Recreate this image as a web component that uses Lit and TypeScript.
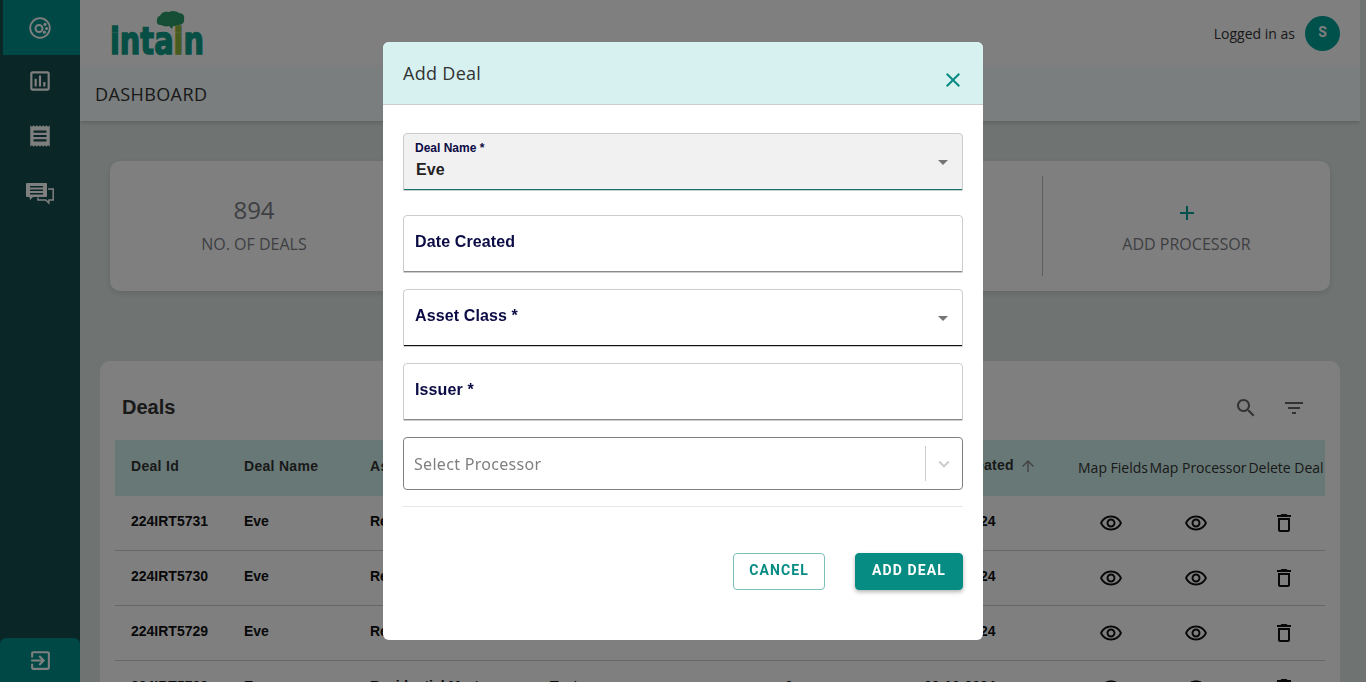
import { LitElement, html, css, svg } from 'lit';
import { customElement } from 'lit/decorators.js';

const icon = (d: string, size = 24) => html`<svg width=${size} height=${size} viewBox="0 0 24 24" fill="currentColor"><path d=${d} /></svg>`;

const EYE = 'M12 6.5c3.79 0 7.17 2.13 8.82 5.5-1.65 3.37-5.02 5.5-8.82 5.5S4.83 15.37 3.18 12C4.83 8.63 8.21 6.5 12 6.5m0-2C7 4.5 2.73 7.61 1 12c1.73 4.39 6 7.5 11 7.5s9.27-3.11 11-7.5c-1.73-4.39-6-7.5-11-7.5zm0 5c1.38 0 2.5 1.12 2.5 2.5s-1.12 2.5-2.5 2.5-2.5-1.12-2.5-2.5 1.12-2.5 2.5-2.5m0-2c-2.48 0-4.5 2.02-4.5 4.5s2.02 4.5 4.5 4.5 4.5-2.02 4.5-4.5-2.02-4.5-4.5-4.5z';
const TRASH = 'M6 19c0 1.1.9 2 2 2h8c1.1 0 2-.9 2-2V7H6v12zM8 9h8v10H8V9zm7.5-5l-1-1h-5l-1 1H5v2h14V4z';
const SEARCH = 'M15.5 14h-.79l-.28-.27C15.41 12.59 16 11.11 16 9.5 16 5.91 13.09 3 9.5 3S3 5.91 3 9.5 5.91 16 9.5 16c1.61 0 3.09-.59 4.23-1.57l.27.28v.79l5 4.99L20.49 19l-4.99-5zm-6 0C7.01 14 5 11.99 5 9.5S7.01 5 9.5 5 14 7.01 14 9.5 11.99 14 9.5 14z';
const FILTER = 'M10 18h4v-2h-4v2zM3 6v2h18V6H3zm3 7h12v-2H6v2z';
const PLUS = 'M19 13h-6v6h-2v-6H5v-2h6V5h2v6h6v2z';
const CLOSE = 'M19 6.41 17.59 5 12 10.59 6.41 5 5 6.41 10.59 12 5 17.59 6.41 19 12 13.41 17.59 19 19 17.59 13.41 12z';
const UP = 'M4 12l1.41 1.41L11 7.83V20h2V7.83l5.58 5.59L20 12l-8-8-8 8z';
const LOGOUT = 'M10.09 15.59 11.5 17l5-5-5-5-1.41 1.41L12.67 11H3v2h9.67l-2.58 2.59zM19 3H5c-1.11 0-2 .9-2 2v4h2V5h14v14H5v-4H3v4c0 1.1.89 2 2 2h14c1.1 0 2-.9 2-2V5c0-1.1-.9-2-2-2z';
const CHART = 'M19 3H5c-1.1 0-2 .9-2 2v14c0 1.1.9 2 2 2h14c1.1 0 2-.9 2-2V5c0-1.1-.9-2-2-2zm0 16H5V5h14v14zM7 10h2v7H7zm4-3h2v10h-2zm4 6h2v4h-2z';
const RECEIPT = 'M3 22l1.5-1.5L6 22l1.5-1.5L9 22l1.5-1.5L12 22l1.5-1.5L15 22l1.5-1.5L18 22l1.5-1.5L21 22V2l-1.5 1.5L18 2l-1.5 1.5L15 2l-1.5 1.5L12 2l-1.5 1.5L9 2 7.5 3.5 6 2 4.5 3.5 3 2v20zM18 17H6v-2h12v2zm0-4H6v-2h12v2zm0-4H6V7h12v2z';
const CHEVRON = 'M7.41 8.59 12 13.17l4.59-4.58L18 10l-6 6-6-6z';

const discIcon = html`<svg width="24" height="24" viewBox="0 0 24 24" fill="none" stroke="currentColor">
  <circle cx="12" cy="12" r="9.8" stroke-width="1.8" />
  <circle cx="11" cy="12.5" r="3.5" stroke-width="2" />
  <circle cx="17" cy="8.4" r="1.6" fill="currentColor" stroke="none" />
  <circle cx="18.6" cy="12.4" r="1.5" fill="currentColor" stroke="none" />
  <circle cx="16.4" cy="16.2" r="1.6" fill="currentColor" stroke="none" />
</svg>`;

const chatIcon = html`<svg width="30" height="24" viewBox="0 0 30 24" fill="none">
  <path fill="currentColor" fill-rule="evenodd" d="M2 1h19a1 1 0 0 1 1 1v12a1 1 0 0 1-1 1H8l-3 3-.5-3H2a1 1 0 0 1-1-1V2a1 1 0 0 1 1-1zM5 4v1.4h13V4zm0 3.5v1.4h13V7.5zm0 3.5v1.4h13V11z" />
  <path stroke="currentColor" stroke-width="1.5" d="M23 7h5.2v11H24l-.2 3-3-3H13v-2.5" />
</svg>`;

const logo = html`<svg class="logo-mark" width="94" height="46" viewBox="0 0 94 46">
  <path fill="#2a9d68" d="M50 6c1-4 6-5 9-4 3-2 8-1 10 1 4 0 6 3 5 6 1 3-2 6-5 6-2 1-4 1-6 1l-1 3-3-3c-3 1-6 0-8-1-3 0-5-2-4-5 0-2 1-4 3-4z" />
  ${svg`<g transform="translate(0 44) scale(.96 1.22)"><text x="0" y="0" font-family="DejaVu Sans" font-weight="700" font-size="30" stroke="#0f9f8a" stroke-width="1.2" fill="#0f9f8a">inta<tspan fill="#8fb83c" stroke="#8fb83c">i</tspan>n</text></g>`}
</svg>`;

const rows = [
  ['224IRT5731', 'Eve', 'Residential Mortgage', 'Test processor', '0', '09-10-2024'],
  ['224IRT5730', 'Eve', 'Residential Mortgage', 'Test processor', '0', '09-10-2024'],
  ['224IRT5729', 'Eve', 'Residential Mortgage', 'Test processor', '0', '09-10-2024'],
  ['224IRT5728', 'Eve', 'Residential Mortgage', 'Test processor', '0', '09-10-2024'],
];

@customElement('app-root')
export class AppRoot extends LitElement {
  static styles = css`
    :host {
      display: block;
      width: 100%;
      height: 682px;
      overflow: hidden;
      position: relative;
      background: #dfe8e5;
      font-family: 'Open Sans', sans-serif;
    }
    .shell { display: flex; height: 682px; }

    .side {
      width: 80px;
      flex: none;
      background: #144c4c;
      color: #fff;
      display: flex;
      flex-direction: column;
    }
    .side-item { display: flex; align-items: center; justify-content: center; }
    .i1 { height: 55px; margin-left: 3px; padding-right: 3px; background: #00908a; }
    .i2 { height: 52px; }
    .i3 { height: 58px; }
    .i4 { height: 58px; }
    .side-out {
      margin-top: auto;
      height: 44px;
      background: #00908a;
      border-radius: 6px 6px 0 0;
      display: flex;
      align-items: center;
      justify-content: center;
    }

    .main { width: 1280px; flex: none; display: flex; flex-direction: column; height: 682px; overflow: hidden; }
    .top {
      height: 66px;
      flex: none;
      background: #fff;
      display: flex;
      align-items: center;
      justify-content: space-between;
      padding: 0 20px 0 30px;
      box-sizing: border-box;
    }
    .logo { height: 46px; }
    .logo-mark { overflow: visible; }
    .user { display: flex; align-items: center; gap: 10px; font-size: 14px; color: #333; }
    .avatar {
      width: 35px;
      height: 35px;
      border-radius: 50%;
      background: #00a096;
      color: #fff;
      font: 700 14px Roboto, sans-serif;
      display: flex;
      align-items: center;
      justify-content: center;
      padding-bottom: 3px;
      box-sizing: border-box;
    }
    .sub {
      height: 55px;
      flex: none;
      background: #f4fcfc;
      box-shadow: 0 2px 4px rgba(0, 0, 0, 0.15);
      display: flex;
      align-items: center;
      padding-left: 15px;
      font-size: 18px;
      letter-spacing: 0.4px;
      color: #333;
    }

    .stats {
      margin: 40px 30px 0 30px;
      height: 130px;
      flex: none;
      background: #fff;
      border-radius: 10px;
      box-shadow: 0 2px 6px rgba(0, 0, 0, 0.12);
      display: grid;
      grid-template-columns: 288px 1fr 288px;
      align-items: center;
    }
    .stat {
      display: flex;
      flex-direction: column;
      align-items: center;
      height: 100px;
      box-sizing: border-box;
      padding-top: 2px;
      justify-content: center;
      color: #7c7f86;
    }
    .stat.last { border-left: 1px solid #bbb; }
    .stat b { font-weight: 400; font-size: 24px; line-height: 34px; height: 34px; }
    .stat svg { color: #00a096; height: 34px; padding-top: 6px; box-sizing: border-box; }
    .stat span { font-size: 16px; line-height: 34px; }

    .deals {
      margin: 70px 20px 0 20px;
      flex: none;
      height: 321px;
      background: #fff;
      border-radius: 10px 10px 0 0;
      padding: 0 15px;
    }
    .deals-head {
      height: 79px;
      display: flex;
      align-items: center;
      color: #666;
      padding: 14px 19px 0 7px;
      box-sizing: border-box;
      gap: 24px;
    }
    .deals-head h2 {
      margin: 0 auto 0 0;
      font: 700 20px 'Liberation Sans', sans-serif;
      color: #333;
    }
    .row {
      display: grid;
      grid-template-columns: 113px 126px 180px 235px 139px 169px 72px 98px 78px;
      align-items: center;
      height: 55px;
      border-bottom: 1px solid #ccc;
      box-sizing: border-box;
      font: 700 14px 'Liberation Sans', sans-serif;
      color: #111;
    }
    .row > div { padding-left: 16px; padding-bottom: 4px; white-space: nowrap; }
    .row > .act {
      padding: 0 4px 0 0;
      display: flex;
      justify-content: center;
      align-items: center;
    }
    .head {
      height: 56px;
      background: #d0f0ec;
      border-bottom: none;
      color: #333;
      letter-spacing: 0.3px;
    }
    .head > div { padding-bottom: 4px; }
    .head > .tool {
      padding: 0 0 2px;
      font: 400 14px 'Open Sans', sans-serif;
      letter-spacing: 0;
      text-align: center;
    }
    .sort { display: inline-flex; vertical-align: middle; color: #888; margin-left: 5px; }

    .overlay {
      position: fixed;
      inset: 0;
      background: rgba(0, 0, 0, 0.5);
    }
    .modal {
      width: 600px;
      height: 598px;
      margin: 42px auto 0;
      background: #fff;
      border-radius: 6px;
      overflow: hidden;
      display: flex;
      flex-direction: column;
    }
    .modal-head {
      height: 63px;
      flex: none;
      box-sizing: border-box;
      background: #d6f1f0;
      border-bottom: 1px solid #ccc;
      padding: 0 20px;
      display: flex;
      justify-content: space-between;
      font-size: 18px;
      letter-spacing: 0.3px;
      color: #333;
    }
    .modal-head span { line-height: 62px; }
    .close { color: #078c83; margin: 26px -2px 0 0; height: 24px; }
    .form { padding: 28px 20px 0; display: flex; flex-direction: column; }
    .field {
      height: 58px;
      box-sizing: border-box;
      border: 1px solid #ccc;
      border-radius: 4px 4px 1px 1px;
      margin-bottom: 16px;
      padding: 0 11px;
      position: relative;
      box-shadow: inset 0 -1px 0 #8a8a8a;
      color: #0b0b45;
      font: 700 16px 'Liberation Sans', sans-serif;
      letter-spacing: 0.12px;
      display: flex;
      flex-direction: column;
    }
    .field .label { margin-top: 17px; line-height: 18px; }
    .field.filled { background: #f1f1f1; margin-bottom: 24px; box-shadow: inset 0 -1px 0 #14726c; }
    .field.filled .label { margin-top: 7px; font-size: 12px; line-height: 14px; letter-spacing: 0; }
    .field.filled .value { color: #222; line-height: 20px; margin-top: 5px; padding-left: 1px; }
    .field.dark { box-shadow: inset 0 -1px 0 #111; }
    .caret {
      position: absolute;
      right: 14px;
      top: 26px;
      border: 5px solid transparent;
      border-top-color: #757575;
      border-bottom: 0;
    }
    .select {
      height: 53px;
      flex: none;
      box-sizing: border-box;
      border: 1px solid #808080;
      border-radius: 4px;
      display: flex;
      align-items: center;
      padding-left: 10px;
      font: 400 16px 'Noto Sans', sans-serif;
      letter-spacing: 0.3px;
      color: #808080;
    }
    .select span { flex: 1; }
    .select i { width: 1px; height: 35px; background: #ccc; }
    .select svg { margin: 0 7px; color: #ccc; }
    .rule { height: 1px; background: #e6e6e6; margin-top: 16px; }
    .actions { display: flex; justify-content: flex-end; gap: 30px; margin-top: 46px; }
    .btn {
      height: 37px;
      box-sizing: border-box;
      border-radius: 4px;
      border: 1px solid #7cc0ba;
      background: #fff;
      color: #078c83;
      font: 700 14px Roboto, sans-serif;
      letter-spacing: 1.1px;
      padding: 0 0 3px;
      width: 92px;
    }
    .btn.primary {
      width: 108px;
      background: #078c83;
      border-color: #078c83;
      color: #fff;
      box-shadow: 0 2px 4px rgba(0, 0, 0, 0.3);
    }
  `;

  render() {
    return html`
      <div class="shell">
        <nav class="side">
          <div class="side-item i1">${discIcon}</div>
          <div class="side-item i2">${icon(CHART, 26)}</div>
          <div class="side-item i3">${icon(RECEIPT, 26)}</div>
          <div class="side-item i4">${chatIcon}</div>
          <div class="side-out">${icon(LOGOUT, 25)}</div>
        </nav>
        <div class="main">
          <header class="top">
            <div class="logo">${logo}</div>
            <div class="user">Logged in as <div class="avatar">S</div></div>
          </header>
          <div class="sub">DASHBOARD</div>
          <section class="stats">
            <div class="stat"><b>894</b><span>NO. OF DEALS</span></div>
            <div></div>
            <div class="stat last">${icon(PLUS)}<span>ADD PROCESSOR</span></div>
          </section>
          <section class="deals">
            <div class="deals-head">
              <h2>Deals</h2>
              ${icon(SEARCH)} ${icon(FILTER)}
            </div>
            <div class="row head">
              <div>Deal Id</div>
              <div>Deal Name</div>
              <div>Asset Class</div>
              <div>Issuer</div>
              <div>Loans</div>
              <div>Date Created<span class="sort">${icon(UP, 18)}</span></div>
              <div class="tool">Map Fields</div>
              <div class="tool">Map Processor</div>
              <div class="tool">Delete Deal</div>
            </div>
            ${rows.map(
              (r) => html`
                <div class="row">
                  ${r.map((c) => html`<div>${c}</div>`)}
                  <div class="act">${icon(EYE)}</div>
                  <div class="act">${icon(EYE)}</div>
                  <div class="act">${icon(TRASH)}</div>
                </div>
              `
            )}
          </section>
        </div>
      </div>

      <div class="overlay">
        <div class="modal">
          <div class="modal-head">
            <span>Add Deal</span>
            <div class="close">${icon(CLOSE)}</div>
          </div>
          <div class="form">
            <div class="field filled">
              <div class="label">Deal Name *</div>
              <div class="value">Eve</div>
              <div class="caret"></div>
            </div>
            <div class="field"><div class="label">Date Created</div></div>
            <div class="field dark">
              <div class="label">Asset Class *</div>
              <div class="caret"></div>
            </div>
            <div class="field"><div class="label">Issuer *</div></div>
            <div class="select">
              <span>Select Processor</span>
              <i></i>
              ${icon(CHEVRON, 22)}
            </div>
            <div class="rule"></div>
            <div class="actions">
              <button class="btn">CANCEL</button>
              <button class="btn primary">ADD DEAL</button>
            </div>
          </div>
        </div>
      </div>
    `;
  }
}
